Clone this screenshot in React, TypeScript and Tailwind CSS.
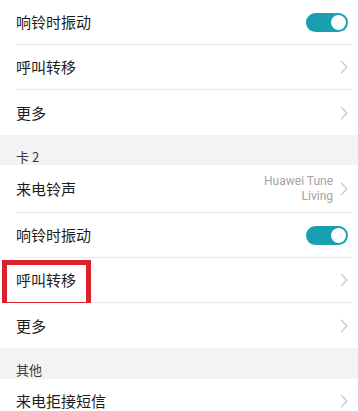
import type { ReactNode } from 'react';

const cjk = "font-['Noto_Sans_CJK_SC','Noto_Sans',sans-serif]";

function Chevron() {
  return (
    <svg width="8" height="14" viewBox="0 0 8 14" className="shrink-0">
      <path d="M1.2 1 L6.8 7 L1.2 13" fill="none" stroke="#c9c9c9" strokeWidth="1.3" />
    </svg>
  );
}

function Toggle() {
  return (
    <div className="flex h-[19px] w-[42px] items-center justify-end rounded-full bg-[#1a9fb1] pr-[2px]">
      <div className="h-[15px] w-[15px] rounded-full bg-white" />
    </div>
  );
}

function Row({
  label,
  height = 'h-[44px]',
  divider = true,
  right,
  children,
}: {
  label: string;
  height?: string;
  divider?: boolean;
  right: ReactNode;
  children?: ReactNode;
}) {
  return (
    <div className="relative bg-white">
      <div className={`flex ${height} items-center justify-between pl-4 pr-[10px]`}>
        <span className={`${cjk} text-[15px] leading-5 text-[#1c1c1c]`}>{label}</span>
        {right}
      </div>
      {divider && <div className="ml-4 mr-[6px] h-px bg-[#e9e9e9]" />}
      {children}
    </div>
  );
}

function Header({ title, height }: { title: string; height: string }) {
  return (
    <div className={`${height} bg-[#f3f3f3] pl-4 pt-[9px]`}>
      <span className={`${cjk} text-[13px] leading-[17px] text-[#3a3a3a]`}>{title}</span>
    </div>
  );
}

export default function App() {
  return (
    <div className="h-[411px] w-[358px] overflow-hidden bg-white">
      <Row label="响铃时振动" right={<Toggle />} />
      <Row label="呼叫转移" right={<Chevron />} />
      <Row label="更多" height="h-[45px]" divider={false} right={<Chevron />} />
      <Header title="卡 2" height="h-[30px]" />
      <Row
        label="来电铃声"
        height="h-[47px]"
        right={
          <div className="flex items-center gap-[7px]">
            <div className="pt-[1px] text-right font-['Roboto',sans-serif] text-[12px] leading-[15px] text-[#a3a3a3]">
              <div>Huawei Tune</div>
              <div>Living</div>
            </div>
            <Chevron />
          </div>
        }
      />
      <Row label="响铃时振动" right={<Toggle />} />
      <Row label="呼叫转移" right={<Chevron />}>
        <div className="absolute left-[2px] top-[2px] h-[47px] w-[89px] border-[5px] border-[#d9222d]" />
      </Row>
      <Row label="更多" height="h-[45px]" divider={false} right={<Chevron />} />
      <Header title="其他" height="h-[31px]" />
      <Row label="来电拒接短信" right={<Chevron />} />
    </div>
  );
}
